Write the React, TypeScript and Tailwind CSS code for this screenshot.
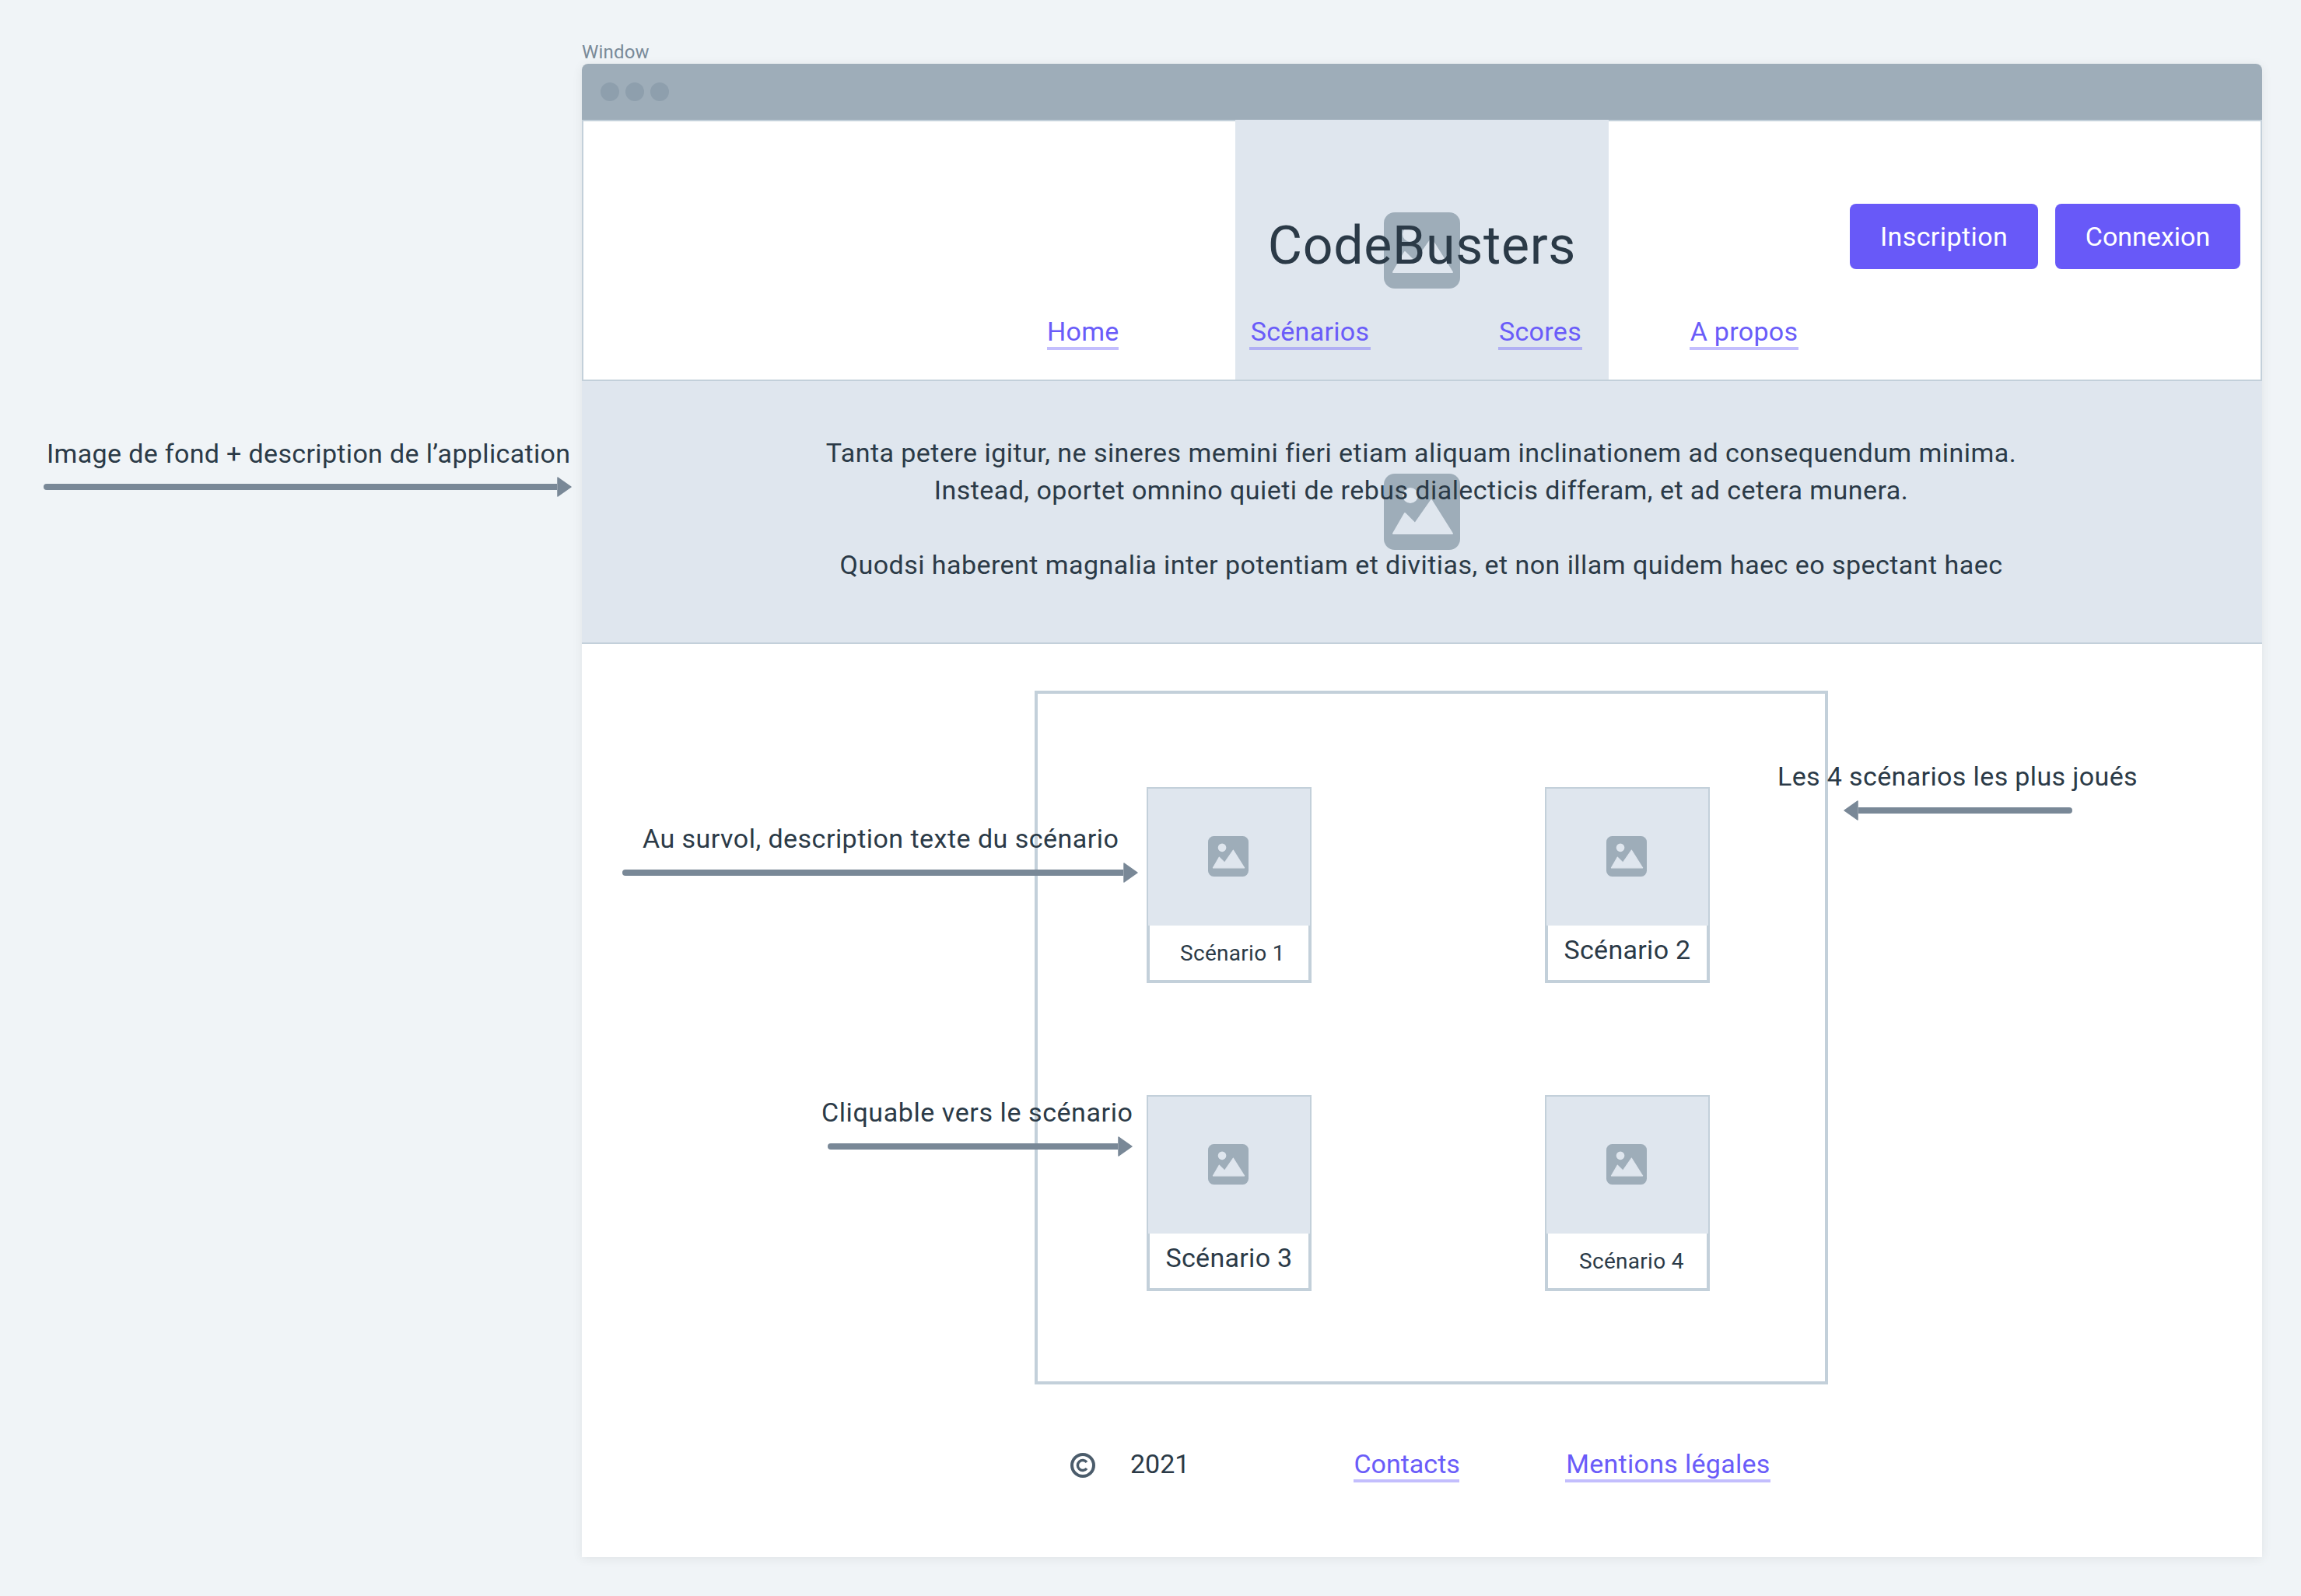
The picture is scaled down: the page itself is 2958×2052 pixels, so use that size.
const BORDER = "border-[#c3d0da]";

const navLinks = [
  { label: "Home", className: "w-[92px] tracking-[0.3px]" },
  { label: "Scénarios", className: "w-[156px] ml-[168px] tracking-[0.3px]" },
  { label: "Scores", className: "w-[108px] ml-[164px] tracking-[0.3px]" },
  { label: "A propos", className: "w-[140px] ml-[138px] tracking-[0.3px]" },
];

const scenarios = [
  { label: "Scénario 1", className: "text-[28px] pl-[39px] pt-[2px] tracking-[0.3px]" },
  { label: "Scénario 2", className: "text-[34px] justify-center pb-[8px] tracking-[0.3px]" },
  { label: "Scénario 3", className: "text-[34px] justify-center pb-[8px] tracking-[0.3px]" },
  { label: "Scénario 4", className: "text-[28px] pl-[40px] pt-[2px] tracking-[0.3px]" },
];

function ImageIcon({ className }: { className: string }) {
  return (
    <svg viewBox="0 0 98 98" className={className}>
      <rect width="98" height="98" rx="14" fill="#9eadb9" />
      <circle cx="34" cy="28" r="10" fill="#dfe6ee" />
      <path d="M12 77 L27 51 L40 64 L61 34 L88 77 Z" fill="#dfe6ee" stroke="#dfe6ee" strokeWidth="2" strokeLinejoin="round" />
    </svg>
  );
}

function Arrow({ className, left }: { className: string; left?: boolean }) {
  return (
    <span className={`absolute flex h-[26px] items-center ${left ? "flex-row-reverse" : ""} ${className}`}>
      <span className={`h-[8px] flex-1 bg-[#798897] ${left ? "rounded-r-full" : "rounded-l-full"}`} />
      <svg viewBox="0 0 19 26" className={`h-[26px] w-[19px] ${left ? "rotate-180" : ""}`}>
        <path d="M1 1 L18 13 L1 25 Z" fill="#798897" stroke="#798897" strokeWidth="1.5" strokeLinejoin="round" />
      </svg>
    </span>
  );
}

function Note({ className, children }: { className: string; children: string }) {
  return <span className={`absolute whitespace-nowrap text-[34px] leading-[48px] text-[#2b3a47] ${className}`}>{children}</span>;
}

function TextLink({ className, children }: { className?: string; children: string }) {
  return (
    <a className={`whitespace-nowrap border-b-4 border-[#6a5cf9]/40 text-center text-[34px] leading-[40px] text-[#6a5cf9] ${className ?? ""}`}>
      {children}
    </a>
  );
}

function Header() {
  return (
    <header className={`grid h-[336px] border-x-2 border-y-2 ${BORDER} bg-white`}>
      <div className="col-start-1 row-start-1 -mt-[2px] ml-[838px] flex w-[480px] justify-center bg-[#dfe6ee] pt-[119px]">
        <ImageIcon className="h-[98px] w-[98px]" />
      </div>
      <div className="relative col-start-1 row-start-1 flex flex-col items-center pt-[120px]">
        <h1 className="text-[68px] font-normal leading-[80px] tracking-[0.01em] text-[#2b3a47]">CodeBusters</h1>
        <nav className="mt-[50px] flex justify-center pl-[2px]">
          {navLinks.map((l) => (
            <TextLink key={l.label} className={l.className}>{l.label}</TextLink>
          ))}
        </nav>
      </div>
      <div className="relative col-start-1 row-start-1 flex items-start justify-end gap-[22px] pr-[26px] pt-[106px]">
        <button className="h-[84px] w-[242px] rounded-lg bg-[#6859f8] text-[34px] tracking-[0.4px] text-white">Inscription</button>
        <button className="h-[84px] w-[238px] rounded-lg bg-[#6859f8] text-[34px] text-white">Connexion</button>
      </div>
    </header>
  );
}

function Hero() {
  return (
    <section className={`grid h-[338px] border-b-2 ${BORDER} bg-[#dfe6ee]`}>
      <div className="col-start-1 row-start-1 flex items-center justify-center">
        <ImageIcon className="h-[98px] w-[98px]" />
      </div>
      <p className="relative col-start-1 row-start-1 pr-[2px] pt-[68px] text-center text-[34px] leading-[48px] tracking-[0.46px] text-[#2b3a47]">
        Tanta petere igitur, ne sineres memini fieri etiam aliquam inclinationem ad consequendum minima.
        <br />
        Instead, oportet omnino quieti de rebus dialecticis differam, et ad cetera munera.
        <br />
        <br />
        Quodsi haberent magnalia inter potentiam et divitias, et non illam quidem haec eo spectant haec
      </p>
    </section>
  );
}

function ScenarioCard({ label, className }: { label: string; className: string }) {
  return (
    <div className="flex h-[252px] w-[212px] flex-col">
      <div className={`flex h-[178px] items-center justify-center border-2 border-b-0 ${BORDER} bg-[#dfe6ee] pb-[2px] pr-[2px]`}>
        <ImageIcon className="h-[52px] w-[52px]" />
      </div>
      <div className={`flex flex-1 items-center border-4 border-t-0 ${BORDER} bg-white leading-none text-[#2b3a47] ${className}`}>
        {label}
      </div>
    </div>
  );
}

function Footer() {
  return (
    <footer className="mt-[82px] flex items-center pl-[628px]">
      <svg viewBox="0 0 32 32" className="h-[32px] w-[32px]">
        <circle cx="16" cy="16" r="14" fill="none" stroke="#4b5c6b" strokeWidth="4" />
        <path d="M21 12 A6.5 6.5 0 1 0 21 20" fill="none" stroke="#4b5c6b" strokeWidth="3.5" />
      </svg>
      <span className="mb-[4px] ml-[45px] text-[34px] leading-[40px] text-[#2b3a47]">2021</span>
      <TextLink className="ml-[211px] w-[136px]">Contacts</TextLink>
      <TextLink className="ml-[136px] w-[264px] tracking-[0.3px]">Mentions légales</TextLink>
    </footer>
  );
}

export default function App() {
  return (
    <div className="relative min-h-[2052px] bg-[#f0f4f7] pl-[748px] pr-[50px] pt-[52px] font-[Roboto,sans-serif]">
      <div className="h-[30px] text-[24px] leading-[30px] tracking-[0.2px] text-[#7a8a98]">Window</div>
      <div className="h-[1920px] rounded-t-lg bg-white shadow-[0_2px_14px_rgba(0,0,0,0.07)]">
        <div className="flex h-[72px] items-center gap-[8px] rounded-t-lg bg-[#9eadb9] pl-[24px]">
          <span className="h-[24px] w-[24px] rounded-full bg-[#8e9fad]" />
          <span className="h-[24px] w-[24px] rounded-full bg-[#8e9fad]" />
          <span className="h-[24px] w-[24px] rounded-full bg-[#8e9fad]" />
        </div>
        <Header />
        <Hero />
        <main className={`ml-[582px] mt-[60px] grid h-[892px] w-[1020px] grid-cols-[212px_212px] content-start gap-x-[300px] gap-y-[144px] border-4 ${BORDER} pl-[140px] pt-[120px]`}>
          {scenarios.map((s) => (
            <ScenarioCard key={s.label} {...s} />
          ))}
        </main>
        <Footer />
      </div>

      {/* annotations du wireframe, posées par-dessus la page */}
      <Note className="left-[60px] top-[559px] tracking-[0.34px]">Image de fond + description de l’application</Note>
      <Arrow className="left-[56px] top-[613px] w-[679px]" />
      <Note className="left-[826px] top-[1054px] tracking-[0.47px]">Au survol, description texte du scénario</Note>
      <Arrow className="left-[800px] top-[1109px] w-[663px]" />
      <Note className="left-[1056px] top-[1406px] tracking-[0.58px]">Cliquable vers le scénario</Note>
      <Arrow className="left-[1064px] top-[1461px] w-[392px]" />
      <Note className="left-[2285px] top-[974px] tracking-[0.37px]">Les 4 scénarios les plus joués</Note>
      <Arrow left className="left-[2370px] top-[1029px] w-[294px]" />
    </div>
  );
}
